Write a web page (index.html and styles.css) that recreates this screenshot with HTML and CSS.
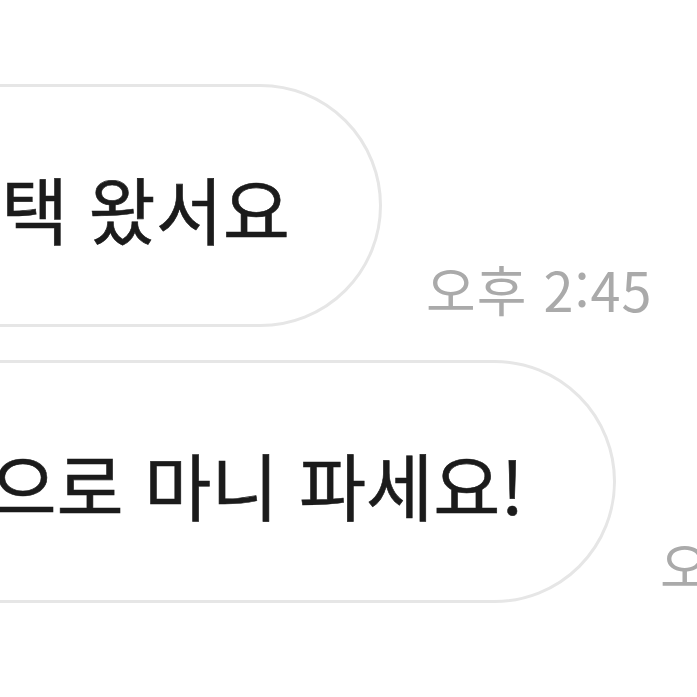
FILE: index.html
```html
<!DOCTYPE html>
<html lang="ko">
<head>
  <meta charset="UTF-8" />
  <meta name="viewport" content="width=device-width, initial-scale=1.0"/>
  <title>채팅</title>
  <link rel="stylesheet" href="styles.css">
</head>
<body>
  <div class="chat">
    <div class="row">
      <div class="bubble bubble-short">
        <span class="msg">택배 가택 왔서요</span>
      </div>
      <span class="time">오후 2:45</span>
    </div>
    <div class="row">
      <div class="bubble bubble-long">
        <span class="msg">앞으로 마니 파세요!</span>
      </div>
      <span class="time">오후 2:45</span>
    </div>
  </div>
</body>
</html>
```

FILE: styles.css
```css
html, body {
  margin: 0;
  background: #fff;
  overflow: hidden;
}
body {
  font-family: "Noto Sans CJK KR", "Noto Sans", sans-serif;
  color: #1b1b1b;
}
.chat {
  display: flex;
  flex-direction: column;
  gap: 33px;
  padding-top: 84px;
}
.row {
  display: flex;
  align-items: flex-end;
  white-space: nowrap;
}
.bubble {
  flex-shrink: 0;
  box-sizing: border-box;
  height: 243px;
  margin-left: -300px;
  padding-right: 89px;
  display: flex;
  align-items: center;
  justify-content: flex-end;
  border: 3px solid #e6e6e6;
  border-radius: 122px;
  background: #fff;
}
.bubble-short {
  width: 682px;
}
.bubble-long {
  width: 916px;
}
.msg {
  font-size: 73px;
  line-height: 1;
  padding-top: 4px;
  -webkit-text-stroke: 0.6px #1b1b1b;
}
.time {
  flex-shrink: 0;
  margin-left: 44px;
  margin-bottom: 11px;
  font-size: 54px;
  letter-spacing: 1px;
  line-height: 1;
  color: #aaaaaa;
}
```
